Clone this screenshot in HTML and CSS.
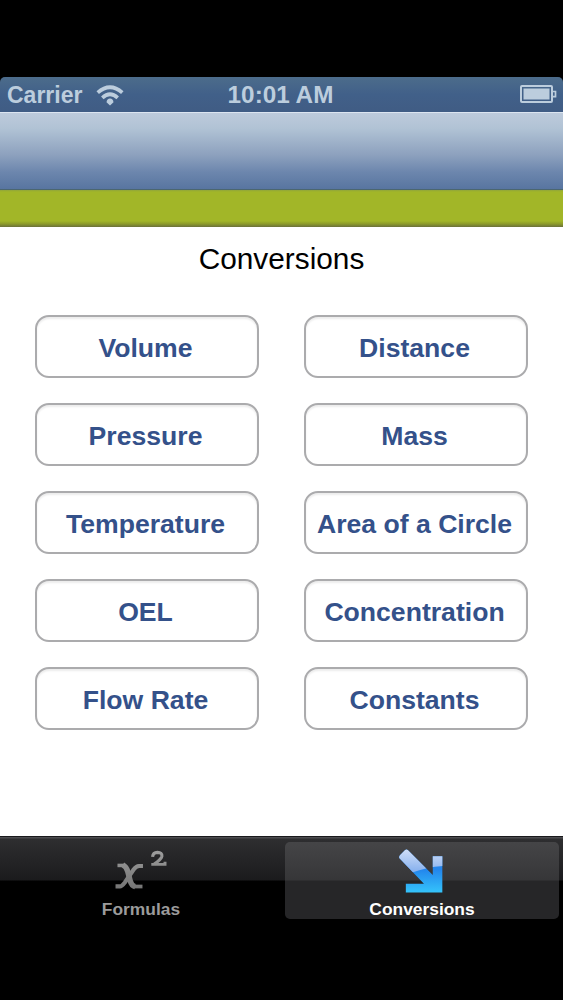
FILE: index.html
```html
<!DOCTYPE html>
<html lang="en">
<head>
    <meta charset="UTF-8">
    <meta name="viewport" content="width=device-width, initial-scale=1.0">
    <title>Conversions</title>
    <link rel="stylesheet" href="styles.css">
</head>
<body>

    <div class="phone">
        <!-- Status bar -->
        <div class="status-bar">
            <div class="status-left">
                <span class="carrier">Carrier</span>
                <svg class="wifi" width="28" height="21" viewBox="0 0 28 21">
                    <g fill="none" stroke="#bccddd" stroke-width="3.7">
                        <path d="M1.7 7.7 Q14 -3.2 26.3 7.7"/>
                        <path d="M6.3 12.8 Q14 5.8 21.7 12.8"/>
                    </g>
                    <path d="M14 20.5 L10.5 17.2 Q11 13.5 14 13.5 Q17 13.5 17.5 17.2 Z" fill="#bccddd"/>
                </svg>
            </div>
            <span class="time">10:01 AM</span>
            <div class="status-right">
                <svg width="37" height="19" viewBox="0 0 37 19">
                    <rect x="1" y="1" width="31" height="16" rx="1" fill="none" stroke="#bccddd" stroke-width="2"/>
                    <rect x="3.5" y="3.5" width="26" height="11" fill="#bccddd"/>
                    <path d="M33 6.5 H35.5 V11.7 H33" fill="none" stroke="#bccddd" stroke-width="1.7"/>
                </svg>
            </div>
        </div>

        <div class="nav-bar"></div>
        <div class="green-bar"></div>

        <div class="content">
            <h1>Conversions</h1>
            <div class="button-grid">
                <button class="btn">Volume</button>
                <button class="btn">Distance</button>
                <button class="btn">Pressure</button>
                <button class="btn">Mass</button>
                <button class="btn">Temperature</button>
                <button class="btn">Area of a Circle</button>
                <button class="btn">OEL</button>
                <button class="btn">Concentration</button>
                <button class="btn">Flow Rate</button>
                <button class="btn">Constants</button>
            </div>
        </div>

        <!-- Bottom tabs -->
        <div class="tab-bar">
            <div class="tab">
                <svg class="tab-icon" width="56" height="50" viewBox="0 0 56 50">
                    <defs>
                        <linearGradient id="grey" x1="0" y1="0" x2="0" y2="46" gradientUnits="userSpaceOnUse">
                            <stop offset="0" stop-color="#a0a0a0"/>
                            <stop offset="1" stop-color="#707070"/>
                        </linearGradient>
                    </defs>
                    <g fill="none" stroke="url(#grey)">
                        <path d="M4 17.8 H11" stroke-width="3.6"/>
                        <path d="M9.5 17.2 Q13 19 14.5 24 L17 33.5 Q18.3 38.5 22 39.4" stroke-width="5.6"/>
                        <path d="M20.5 39.3 H29.5" stroke-width="3.8"/>
                        <path d="M30 18.4 H26 Q23 18.6 20.5 22 L11.5 35.2 Q8.5 39.2 6.5 39.2 H2" stroke-width="4.2"/>
                        <path d="M39.8 9 Q40.2 4.6 44.8 4.4 Q49.8 4.6 49.3 8.3 Q48.8 11.3 41.5 16.3" stroke-width="3.2"/>
                        <path d="M38.5 16.7 H52.5 V14" stroke-width="3"/>
                    </g>
                </svg>
                <span class="tab-label">Formulas</span>
            </div>
            <div class="tab active">
                <svg class="tab-icon" width="56" height="50" viewBox="0 0 56 50">
                    <defs>
                        <linearGradient id="blue" x1="0" y1="22" x2="0" y2="46" gradientUnits="userSpaceOnUse">
                            <stop offset="0" stop-color="#2386ed"/>
                            <stop offset="1" stop-color="#35c5fb"/>
                        </linearGradient>
                        <linearGradient id="shine" x1="0" y1="0" x2="0" y2="24" gradientUnits="userSpaceOnUse">
                            <stop offset="0" stop-color="#d5e1f8"/>
                            <stop offset="1" stop-color="#87b1ee"/>
                        </linearGradient>
                        <clipPath id="arrow">
                            <path d="M13.5 2 L39 27.5 V8.5 H49 V45.5 H11.5 V36.5 H30 L5 10.5 Q4.2 9 5.5 7.5 L10.5 2.3 Q12 1 13.5 2 Z"/>
                        </clipPath>
                    </defs>
                    <g clip-path="url(#arrow)">
                        <rect width="56" height="50" fill="url(#blue)"/>
                        <path d="M0 0 H56 V18 Q35 18.5 18 25 H0 Z" fill="url(#shine)"/>
                    </g>
                </svg>
                <span class="tab-label">Conversions</span>
            </div>
        </div>
    </div>

</body>
</html>
```

FILE: styles.css
```css
body {
    font-family: "Liberation Sans", Arial, sans-serif;
    background-color: #000;
    margin: 0;
}

.phone {
    display: flex;
    flex-direction: column;
    height: 1000px;
    padding-top: 77px;
    box-sizing: border-box;
}

.status-bar {
    display: grid;
    grid-template-columns: 1fr auto 1fr;
    align-items: center;
    height: 35px;
    padding: 0 6px 0 7px;
    box-sizing: border-box;
    background: linear-gradient(#4c6c8b, #416089 50%, #405c84);
    border-radius: 5px 5px 0 0;
    color: #bccddd;
    font-weight: bold;
}

.status-left {
    display: flex;
    align-items: center;
    gap: 14px;
}

.carrier {
    font-size: 23px;
    line-height: 35px;
    padding-top: 1px;
}

.time {
    font-size: 24.3px;
    line-height: 33px;
    padding: 0 3px 2px 0;
}

.status-right {
    display: flex;
    justify-content: flex-end;
    padding-bottom: 1px;
}

.nav-bar {
    height: 78px;
    box-sizing: border-box;
    background: linear-gradient(#bdcadb, #b1c3d5 20%, #8da1be 55%, #6c86ad 78%, #5875a0);
    border-top: 1px solid #dce5f0;
    border-bottom: 1px solid #4b6670;
}

.green-bar {
    height: 37px;
    background: linear-gradient(#91a63a, #a2b628 2px, #a2b628 31px, #8b992b 34px, #6b713b);
}

.content {
    flex: 1;
    background-color: #fff;
}

h1 {
    margin: 12px 0 0;
    font-size: 29.8px;
    line-height: 40px;
    font-weight: normal;
    text-align: center;
    color: #000;
}

.button-grid {
    display: grid;
    grid-template-columns: 224px 224px;
    justify-content: center;
    gap: 25px 45px;
    margin-top: 36px;
}

.btn {
    height: 63px;
    padding: 3px 3px 0 0;
    background-color: #fff;
    border: 2px solid #ababad;
    border-radius: 14px;
    box-shadow: inset 0 2px 2px #ececec;
    font-family: inherit;
    font-size: 26.6px;
    font-weight: bold;
    color: #34518a;
    white-space: nowrap;
}

.tab-bar {
    display: flex;
    height: 164px;
    box-sizing: border-box;
    border-top: 1px solid #19191c;
    background: linear-gradient(#4b4b4e, #4b4b4e 1px, #2e2e30 2px, #1b1b1d 43px, #000 44px);
}

.tab {
    display: flex;
    flex-direction: column;
    align-items: center;
    width: 274px;
    height: 77px;
    margin: 5px 7px 0 4px;
    border-radius: 5px;
}

.tab.active {
    margin: 5px 0 0;
    background: linear-gradient(#454547, #363638 38px, #262628 39px);
}

.tab-icon {
    margin-top: 6px;
}

.tab-label {
    font-size: 17.4px;
    line-height: 20px;
    font-weight: bold;
    color: #9b9b9b;
    margin-top: 2px;
}

.active .tab-label {
    color: #fff;
}
```
